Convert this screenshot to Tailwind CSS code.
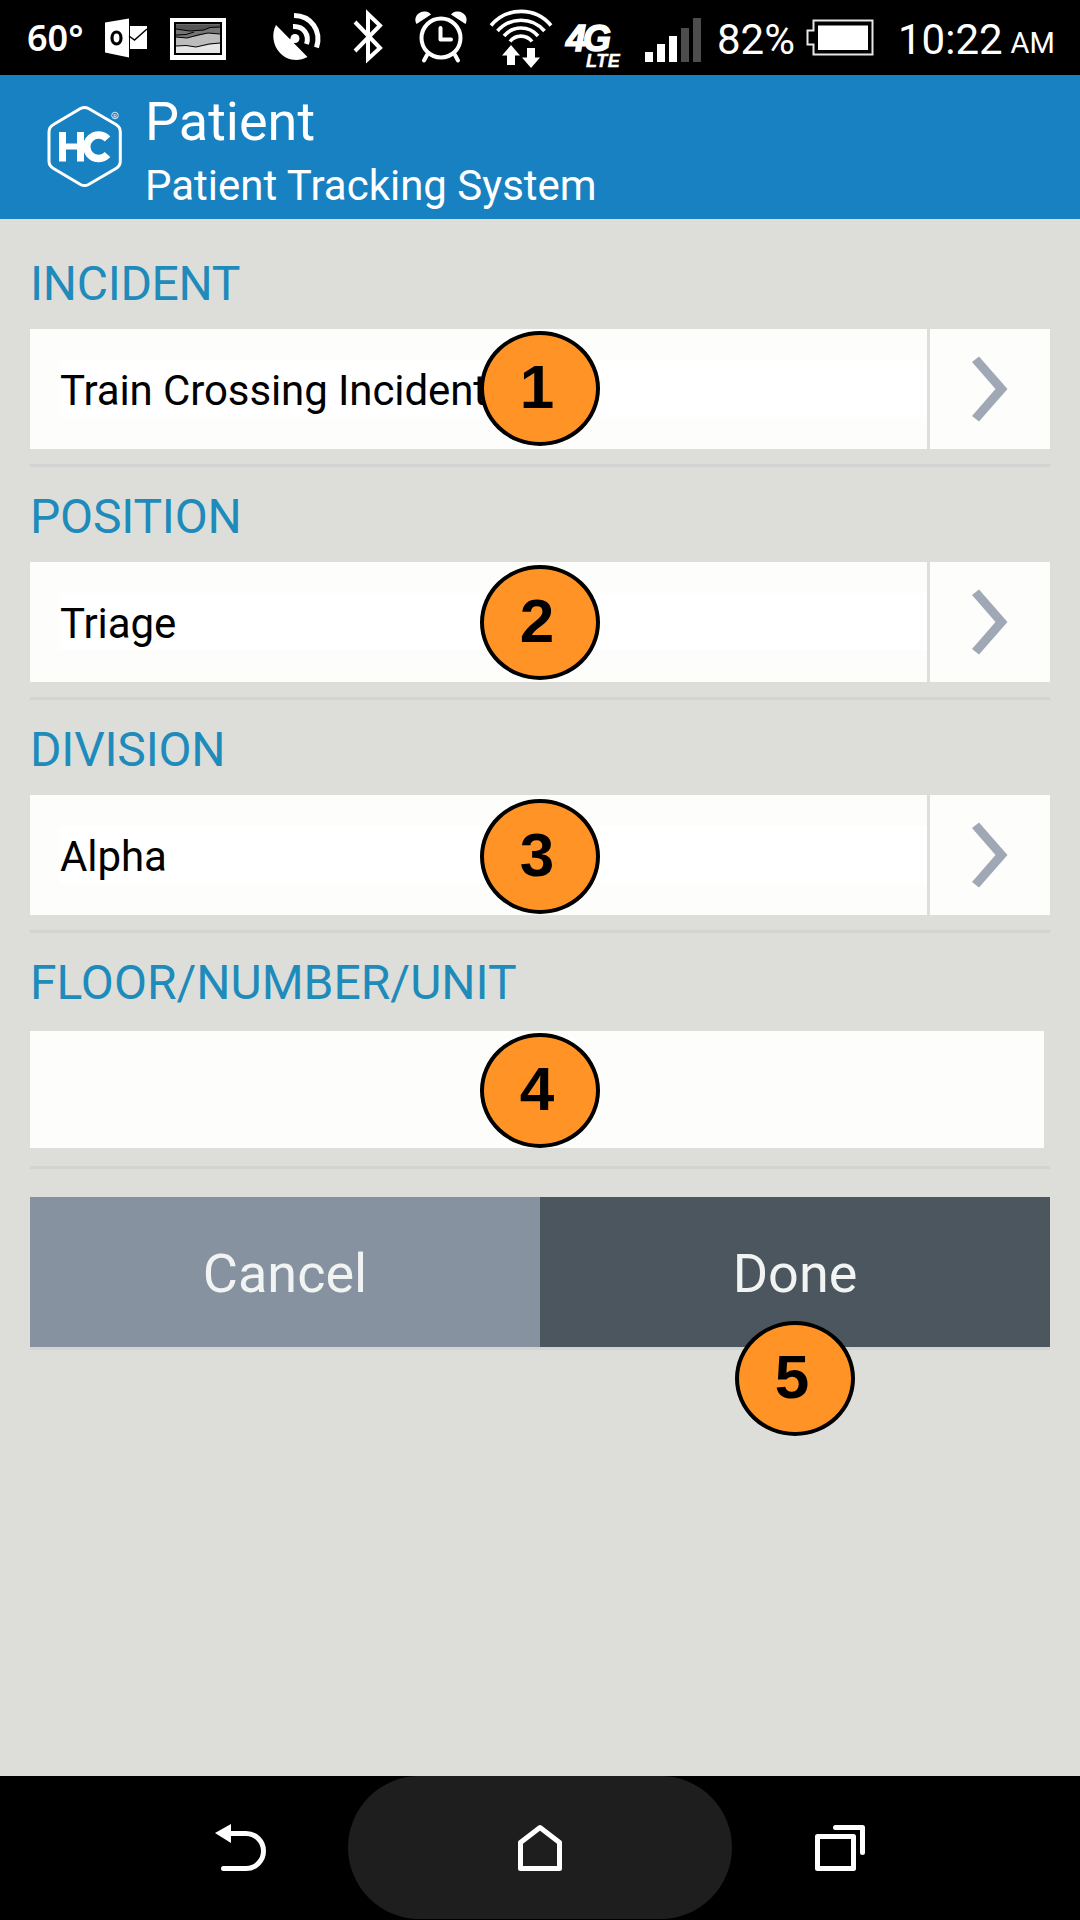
<!DOCTYPE html>
<html lang="en">
<head>
<meta charset="utf-8">
<title>Patient Tracking System</title>
<script src="https://cdn.jsdelivr.net/npm/@tailwindcss/browser@4"></script>
</head>
<body class="w-[1080px] h-[1920px] overflow-hidden bg-[#dddeda] font-['Roboto',sans-serif] flex flex-col">

<!-- Status bar -->
<div class="h-[75px] shrink-0 bg-black text-white flex items-center whitespace-nowrap">
  <span class="ml-[27px] w-[73px] font-['Noto_Sans',sans-serif] font-semibold text-[36px] leading-[75px]">60°</span>
  <svg class="w-[480px] h-[75px] shrink-0" viewBox="100 0 480 75" fill="none">
    <!-- mail -->
    <path d="M105 22.500L129 18.500V57.500L105 52.500Z" fill="#fff"/>
    <ellipse cx="116.500" cy="38" rx="4.500" ry="6" stroke="#000" stroke-width="3.200"/>
    <path d="M130 26H147V49H130Z" fill="#fff"/>
    <path d="M129 36L134.500 40L147 29" stroke="#000" stroke-width="1.500"/>
    <!-- picture -->
    <path d="M170 18H226V60H170Z" fill="#fff"/>
    <path d="M174 22H222V55H174Z" fill="#000"/>
    <path d="M176 24.500H220V53H176Z" fill="#e6e6e6"/>
    <path d="M176 24.500H220V43L209 45L196 47L186 45.500L176 46Z" fill="#bcbcbc"/>
    <path d="M176 24.500H220V34L208 33L198 36L186 38L176 37Z" fill="#757575"/>
    <path d="M176 24.500H220V27L210 28L204 30L190 31L176 29Z" fill="#555"/>
    <path d="M176 29L190 31L204 30L210 27.500L220 27M176 35L186 34.500L194 32M176 37L187 38L198 35L208 33L220 34M176 46L186 45.500L196 47L209 44L220 43" stroke="#000" stroke-width="1"/>
    <!-- satellite dish -->
    <path d="M276 25L307.500 57C298 62 287 60.500 280 53C272.500 45 271.500 33 276 25Z" fill="#fff"/>
    <path d="M288 45L295 38" stroke="#fff" stroke-width="5"/>
    <circle cx="295" cy="38.500" r="4.500" fill="#fff"/>
    <path d="M293 26.500C304 26 309.500 35 306.500 44M294 15.500C311 15.500 322 31 316.500 47.500" stroke="#fff" stroke-width="5"/>
    <!-- bluetooth -->
    <path d="M355 22L380 48L368 59V14L380 25.500L355 51" stroke="#fff" stroke-width="4"/>
    <!-- alarm -->
    <circle cx="441" cy="38" r="19.500" stroke="#fff" stroke-width="4"/>
    <path d="M440.500 28V39.500H451" stroke="#fff" stroke-width="4" stroke-linecap="round" stroke-linejoin="round"/>
    <path d="M427 55L424 60.500M455 55L458 60.500" stroke="#fff" stroke-width="4" stroke-linecap="round"/>
    <path d="M416.500 24C413 18 418 11 425 11.500C428 11.500 430 13 431 14.500ZM465.500 24C469 18 464 11 457 11.500C454 11.500 452 13 451 14.500Z" fill="#fff"/>
    <!-- wifi with transfer arrows -->
    <path d="M491 25.500A39 39 0 0 1 551 25.500M497.500 31A31 31 0 0 1 544.500 31M504 36A22 22 0 0 1 538 36M510 41.500A14 14 0 0 1 532 41.500" stroke="#fff" stroke-width="3.600"/>
    <path d="M511 45L520 55.500H515V65H507V55.500H502ZM531 68L522 57.500H527V48H535V57.500H540Z" fill="#fff"/>
  </svg>
  <div class="w-[60px] h-[75px] shrink-0 ml-[-14px] italic font-bold font-['Liberation_Sans',sans-serif] flex flex-col pt-[23px]">
    <div class="h-[30px] text-[36px] leading-[32px] tracking-[-3px] [-webkit-text-stroke:1.500px_white]">4G</div>
    <div class="ml-[20px] h-[16px] text-[18px] leading-[16px] tracking-[0.500px] [-webkit-text-stroke:0.400px_white]">LTE</div>
  </div>
  <div class="ml-[19px] w-[56px] h-[75px] shrink-0 flex items-end gap-1 pb-[13px]">
    <i class="w-2 h-[10px] bg-white"></i><i class="w-2 h-[18px] bg-white"></i><i class="w-2 h-[26px] bg-white"></i><i class="w-2 h-[34px] bg-[#4d4d4d]"></i><i class="w-2 h-[44px] bg-[#4d4d4d]"></i>
  </div>
  <span class="ml-[16px] w-[88px] text-[42px] leading-[75px] pt-[4px]">82%</span>
  <svg class="w-[70px] h-[75px] shrink-0" viewBox="805 0 70 75" fill="none">
    <path d="M813.500 20.500H872.500V54.500H813.500V44.500H807.500V30.500H813.500Z" stroke="#e8e8e8" stroke-width="2"/>
    <path d="M818 25.500H868V50H818Z" fill="#fff"/>
  </svg>
  <span class="ml-[23px] text-[42px] leading-[75px] pt-[4px]">10:22</span>
  <span class="ml-[8px] text-[29px] leading-[75px] pt-[12px]">AM</span>
</div>

<!-- App header -->
<header class="h-36 shrink-0 bg-[#1881c2] text-white flex">
  <svg class="ml-10 mt-[21px] w-[100px] h-[100px] shrink-0" viewBox="40 96 100 100" fill="none">
    <path d="M80.500 108.500Q84.500 106.300 88.500 108.500L116 124.500Q120.300 127 120.300 132V161Q120.300 166 116 168.500L88.500 184.500Q84.500 186.700 80.500 184.500L53.500 168.500Q49 166 49 161V132Q49 127 53.500 124.500Z" stroke="#fff" stroke-width="3"/>
    <path d="M59 132H66V143.500H77V132H84V161.500H77V149.500H66V161.500H59Z" fill="#fff"/>
    <path d="M107.500 139A11.800 11.800 0 1 0 107.500 154.500" stroke="#fff" stroke-width="7.400"/>
    <circle cx="115" cy="115.500" r="3.300" stroke="#fff" stroke-width=".8"/>
    <text x="115" y="117.500" font-size="5.500" text-anchor="middle" fill="#fff">R</text>
  </svg>
  <div class="ml-[5px]">
    <h1 class="text-[54px] leading-[64px] mt-[15px]">Patient</h1>
    <h2 class="text-[42px] leading-[50px] mt-[7px]">Patient Tracking System</h2>
  </div>
</header>

<main class="flex-1 px-[30px] pt-[15px]">
  <section class="border-b-3 border-[#d3d3d3] pb-[15px]">
    <h3 class="h-[95px] pt-1 text-[48px] leading-[91px] tracking-[-0.300px] text-[#1e8bbb]">INCIDENT</h3>
    <div class="relative h-[120px] flex gap-[3px]">
      <div class="flex-1 bg-[#fdfefc] pl-[30px] pt-[31px]"><div class="h-[57px] bg-white text-[42px] leading-[61px] tracking-[-0.100px]">Train Crossing Incident</div></div>
      <div class="w-[120px] bg-[#fdfefc] flex"><svg class="w-full h-full" viewBox="930 329 120 120"><path d="M979 356.500L1007.500 389L979 421.500L972 416L995.500 389L972 362Z" fill="#a0a8b5"/></svg></div>
      <div class="absolute left-[450px] top-[2px] w-[120px] h-[115px] rounded-[50%] border-4 border-black bg-[#ff9326] text-center pr-[6px] font-['Liberation_Sans',sans-serif] font-bold text-[62px] leading-[103px]">1</div>
    </div>
  </section>
  <section class="border-b-3 border-[#d3d3d3] pb-[15px]">
    <h3 class="h-[95px] pt-1 text-[48px] leading-[91px] tracking-[-0.200px] text-[#1e8bbb]">POSITION</h3>
    <div class="relative h-[120px] flex gap-[3px]">
      <div class="flex-1 bg-[#fdfefc] pl-[30px] pt-[31px]"><div class="h-[57px] bg-white text-[42px] leading-[61px] tracking-[-0.100px]">Triage</div></div>
      <div class="w-[120px] bg-[#fdfefc] flex"><svg class="w-full h-full" viewBox="930 329 120 120"><path d="M979 356.500L1007.500 389L979 421.500L972 416L995.500 389L972 362Z" fill="#a0a8b5"/></svg></div>
      <div class="absolute left-[450px] top-[3px] w-[120px] h-[115px] rounded-[50%] border-4 border-black bg-[#ff9326] text-center pr-[6px] font-['Liberation_Sans',sans-serif] font-bold text-[62px] leading-[103px]">2</div>
    </div>
  </section>
  <section class="border-b-3 border-[#d3d3d3] pb-[15px]">
    <h3 class="h-[95px] pt-1 text-[48px] leading-[91px] tracking-[-0.200px] text-[#1e8bbb]">DIVISION</h3>
    <div class="relative h-[120px] flex gap-[3px]">
      <div class="flex-1 bg-[#fdfefc] pl-[30px] pt-[31px]"><div class="h-[57px] bg-white text-[42px] leading-[61px] tracking-[-0.100px]">Alpha</div></div>
      <div class="w-[120px] bg-[#fdfefc] flex"><svg class="w-full h-full" viewBox="930 329 120 120"><path d="M979 356.500L1007.500 389L979 421.500L972 416L995.500 389L972 362Z" fill="#a0a8b5"/></svg></div>
      <div class="absolute left-[450px] top-[4px] w-[120px] h-[115px] rounded-[50%] border-4 border-black bg-[#ff9326] text-center pr-[6px] font-['Liberation_Sans',sans-serif] font-bold text-[62px] leading-[103px]">3</div>
    </div>
  </section>
  <section class="border-b-3 border-[#d3d3d3] pb-[18px]">
    <h3 class="h-[98px] pt-1 text-[48px] leading-[91px] text-[#1e8bbb]">FLOOR/NUMBER/UNIT</h3>
    <div class="relative h-[117px] mr-[6px] bg-[#fdfefc]">
      <div class="absolute left-[450px] top-[2px] w-[120px] h-[115px] rounded-[50%] border-4 border-black bg-[#ff9326] text-center pr-[6px] font-['Liberation_Sans',sans-serif] font-bold text-[62px] leading-[103px]">4</div>
    </div>
  </section>
  <div class="relative mt-7 h-[153px] border-b-3 border-[#d3d3d3] flex text-[54px] leading-[154px] text-center text-[#f1f4f3]">
    <div class="w-1/2 h-[150px] bg-[#8792a1]">Cancel</div>
    <div class="w-1/2 h-[150px] bg-[#4c565f]">Done</div>
    <div class="absolute left-[705px] top-[124px] w-[120px] h-[115px] rounded-[50%] border-4 border-black bg-[#ff9326] text-black pr-[6px] font-['Liberation_Sans',sans-serif] font-bold text-[62px] leading-[103px]">5</div>
  </div>
</main>

<!-- Navigation bar -->
<nav class="h-36 shrink-0 bg-black flex justify-center">
  <svg class="w-[348px] h-36" viewBox="0 1776 348 144" fill="none">
    <path d="M215 1833L231 1824V1843Z" fill="#fff"/>
    <path d="M229 1833.500H246A17.500 17.500 0 0 1 246 1868.500H223.500" stroke="#fff" stroke-width="5" stroke-linecap="round"/>
  </svg>
  <div class="w-96 h-[143px] rounded-full bg-[#1e1e1e] flex">
    <svg class="w-96 h-[143px]" viewBox="348 1776 384 143" fill="none">
      <path d="M520.500 1842.500L540 1827.500L559.500 1842.500V1868.500H520.500Z" stroke="#fff" stroke-width="5" stroke-linejoin="round"/>
    </svg>
  </div>
  <svg class="w-[348px] h-36" viewBox="732 1776 348 144" fill="none">
    <path d="M817.500 1836.500H853.500V1868.500H817.500ZM835.500 1827.500H862.500V1852.500" stroke="#fff" stroke-width="5" stroke-linejoin="round" stroke-linecap="round"/>
  </svg>
</nav>
</body>
</html>
